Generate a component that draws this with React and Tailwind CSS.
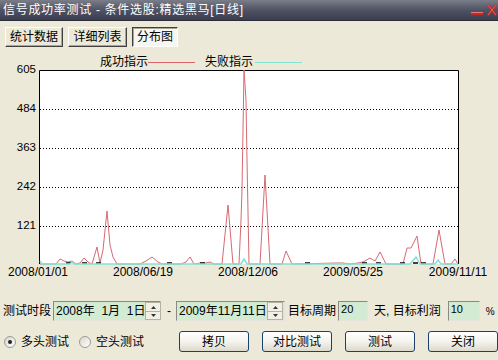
import React from 'react';

const FONT = "font-['Liberation_Sans','Noto_Sans_CJK_SC',sans-serif]";

// success series, page coordinates (x, y) of the plot
const redPts = [
  [40, 264], [56, 264], [60, 259], [64, 261], [68, 262], [72, 261], [76, 264], [80, 263], [84, 258], [88, 262],
  [92, 264], [97, 247], [100, 263], [103, 250], [107, 211], [110, 245], [113, 257], [117, 264], [140, 264],
  [146, 261], [152, 257], [158, 262], [162, 264], [181, 264], [186, 262], [190, 257], [194, 264], [200, 263],
  [206, 263], [210, 262], [214, 264], [222, 264], [228, 205], [233, 264], [239, 264], [241, 220], [242, 190],
  [244, 70], [246, 100], [247, 160], [249, 264], [260, 264], [265, 175], [270, 264], [282, 264], [286, 251],
  [292, 264], [338, 263], [343, 263], [350, 264], [358, 263], [363, 262], [370, 258], [375, 261], [380, 252],
  [386, 264], [403, 264], [407, 248], [411, 248], [417, 236], [421, 264], [433, 264], [439, 230], [445, 264],
  [451, 264], [455, 259], [458, 264],
];

const cyanPts = [
  [40, 261], [42, 264], [70, 264], [72, 262], [74, 264], [241, 264], [244, 259], [247, 264], [410, 264],
  [416, 257], [420, 264], [435, 264], [438, 260], [441, 264], [458, 264],
];

const blackMarks = [66, 82, 96, 167, 200, 305, 362, 376, 400, 413, 421];

const toPts = (arr) => arr.map(([x, y]) => `${x},${y - 50}`).join(' ');

const gridY = [59.5, 98.5, 137.5, 176.5];
const yLabels = [
  { v: '605', y: 20 },
  { v: '484', y: 59 },
  { v: '363', y: 98 },
  { v: '242', y: 137 },
  { v: '121', y: 176 },
];
const xLabels = [
  { t: '2008/01/01', x: 38 },
  { t: '2008/06/19', x: 143 },
  { t: '2008/12/06', x: 248 },
  { t: '2009/05/25', x: 353 },
  { t: '2009/11/11', x: 458 },
];

const Chart = () => (
  <svg width="498" height="228" className="block mt-[3px]">
    <g fontFamily="'Noto Sans CJK SC', 'Liberation Sans', sans-serif" fontSize="12" fill="#000">
      <text x="100" y="13" dominantBaseline="middle">成功指示</text>
      <text x="205" y="13" dominantBaseline="middle">失败指示</text>
    </g>
    <line x1="148" y1="12.5" x2="195" y2="12.5" stroke="#d9646f" strokeWidth="1" />
    <line x1="255" y1="12.5" x2="302" y2="12.5" stroke="#7fe3d6" strokeWidth="1" />

    <rect x="39" y="20" width="420" height="194" fill="#fff" />
    {gridY.map((y) => (
      <line key={y} x1="40" y1={y} x2="459" y2={y} stroke="#000" strokeDasharray="1 2" />
    ))}
    <polyline points="39.5,214 39.5,20.5 458.5,20.5 458.5,214" fill="none" stroke="#000" />

    <polyline points={toPts(redPts)} fill="none" stroke="#d66a72" strokeWidth="1" />
    {blackMarks.map((x) => (
      <line key={x} x1={x} y1="213" x2={x + 5} y2="213" stroke="#000" strokeWidth="1.5" />
    ))}
    <polyline points={toPts(cyanPts)} fill="none" stroke="#7fe3d6" strokeWidth="1.5" />

    <g fontFamily="'Liberation Sans', sans-serif" fill="#000">
      {yLabels.map((l) => (
        <text key={l.v} x="36" y={l.y} fontSize="11.5" textAnchor="end" dominantBaseline="middle">{l.v}</text>
      ))}
      {xLabels.map((l) => (
        <text key={l.t} x={l.x} y="223" fontSize="12" textAnchor="middle" dominantBaseline="middle">{l.t}</text>
      ))}
    </g>
  </svg>
);

const Spinner = () => (
  <div className="flex flex-col w-[16px] h-[18px] ml-auto shrink-0">
    <div className="h-[9px] flex items-center justify-center bg-[#f1efe6] border border-[#b5b2a5] border-b-0">
      <svg width="5" height="3"><path d="M0 3 L2.5 0 L5 3 Z" fill="#333" /></svg>
    </div>
    <div className="h-[9px] flex items-center justify-center bg-[#f1efe6] border border-[#b5b2a5]">
      <svg width="5" height="3"><path d="M0 0 L2.5 3 L5 0 Z" fill="#333" /></svg>
    </div>
  </div>
);

const DateBox = ({ text, w }) => (
  <div className={`flex items-center shrink-0 h-[20px] bg-[#d3ead3] border border-t-[#8a8a80] border-l-[#8a8a80] border-b-[#e6e4da] border-r-[#e6e4da] pl-[2px] pr-[1px] text-[12px] ${w}`}>
    <span className="whitespace-pre">{text}</span>
    <Spinner />
  </div>
);

const SmallBox = ({ text, w }) => (
  <div className={`shrink-0 h-[20px] bg-[#d3ead3] border border-t-[#8a8a80] border-l-[#8a8a80] border-b-[#e6e4da] border-r-[#e6e4da] pl-[2px] text-[11px] leading-[14px] ${w}`}>
    {text}
  </div>
);

const XpButton = ({ label }) => (
  <button className="w-[70px] h-[21px] shrink-0 rounded-[3px] border border-[#1c3f6e] bg-linear-to-b from-white via-[#f4f3ee] to-[#dcd9cd] text-[12px] leading-none text-black">
    {label}
  </button>
);

const Radio = ({ checked, label }) => (
  <div className="flex items-center shrink-0">
    <div className="w-[12px] h-[12px] rounded-full border border-[#9a9a92] bg-linear-to-br from-[#d8d6cc] to-white flex items-center justify-center">
      {checked && <div className="w-[4px] h-[4px] rounded-full bg-[#222]" />}
    </div>
    <span className="ml-[5px] text-[12px] whitespace-nowrap">{label}</span>
  </div>
);

const App = () => {
  const raised = 'border border-t-white border-l-white border-b-[#404040] border-r-[#404040] shadow-[inset_-1px_-1px_0_#a9a695]';
  return (
    <div className={`w-[498px] h-[360px] bg-[#ece9d8] overflow-hidden text-black ${FONT}`}>
      {/* title bar */}
      <div className="h-[21px] flex items-center bg-linear-to-b from-[#7b7e89] via-[#4f5363] to-[#393d4d] border-b border-[#2b2e3a]">
        <span className="pl-[3px] text-white text-[12px] leading-none whitespace-pre tracking-[0.7px]">信号成功率测试 - 条件选股:精选黑马[日线]</span>
        <div className="ml-auto flex items-end pr-[1px] gap-[4px]">
          <svg width="12" height="6" className="mt-[6px]">
            <rect x="0" y="2" width="12" height="3" fill="#c22a2a" />
            <rect x="0" y="2" width="12" height="1" fill="#e87a7a" />
          </svg>
          <svg width="10" height="12">
            <path d="M1 1 L9 11 M9 1 L1 11" stroke="#c22a2a" strokeWidth="2.5" />
            <path d="M1 1 L9 11 M9 1 L1 11" stroke="#e56868" strokeWidth="0.8" />
          </svg>
        </div>
      </div>

      {/* tabs */}
      <div className="flex items-center mt-[6px] pl-[5px] gap-[5px]">
        <div className={`w-[58px] h-[20px] flex items-center justify-center text-[12px] ${raised}`}>统计数据</div>
        <div className={`w-[59px] h-[20px] flex items-center justify-center text-[12px] ${raised}`}>详细列表</div>
        <div className="w-[46px] h-[20px] flex items-center justify-center text-[12px] bg-[#f7f6f1] border border-t-[#404040] border-l-[#404040] border-b-white border-r-white shadow-[inset_1px_1px_0_#a9a695]">分布图</div>
      </div>

      <Chart />

      {/* test period row */}
      <div className="flex items-center mt-[23px] h-[20px] pl-[3px] text-[12px] whitespace-nowrap">
        <span className="shrink-0">测试时段</span>
        <div className="ml-[2px] shrink-0"><DateBox text="2008年  1月  1日" w="w-[108px]" /></div>
        <span className="ml-[6px] shrink-0">-</span>
        <div className="ml-[5px] shrink-0"><DateBox text="2009年11月11日" w="w-[109px]" /></div>
        <span className="ml-[3px] shrink-0">目标周期</span>
        <div className="ml-[2px] shrink-0"><SmallBox text="20" w="w-[30px]" /></div>
        <span className="ml-[6px] shrink-0 whitespace-pre">天, 目标利润</span>
        <div className="ml-[7px] shrink-0"><SmallBox text="10" w="w-[32px]" /></div>
        <span className="ml-[6px] shrink-0 text-[10px]">%</span>
      </div>

      {/* mode + buttons row */}
      <div className="flex items-center mt-[10px] pl-[4px]">
        <Radio checked label="多头测试" />
        <div className="ml-[10px]"><Radio label="空头测试" /></div>
        <div className="ml-[35px] flex gap-[13px]">
          <XpButton label="拷贝" />
          <XpButton label="对比测试" />
          <XpButton label="测试" />
          <XpButton label="关闭" />
        </div>
      </div>
    </div>
  );
};

export default App;
